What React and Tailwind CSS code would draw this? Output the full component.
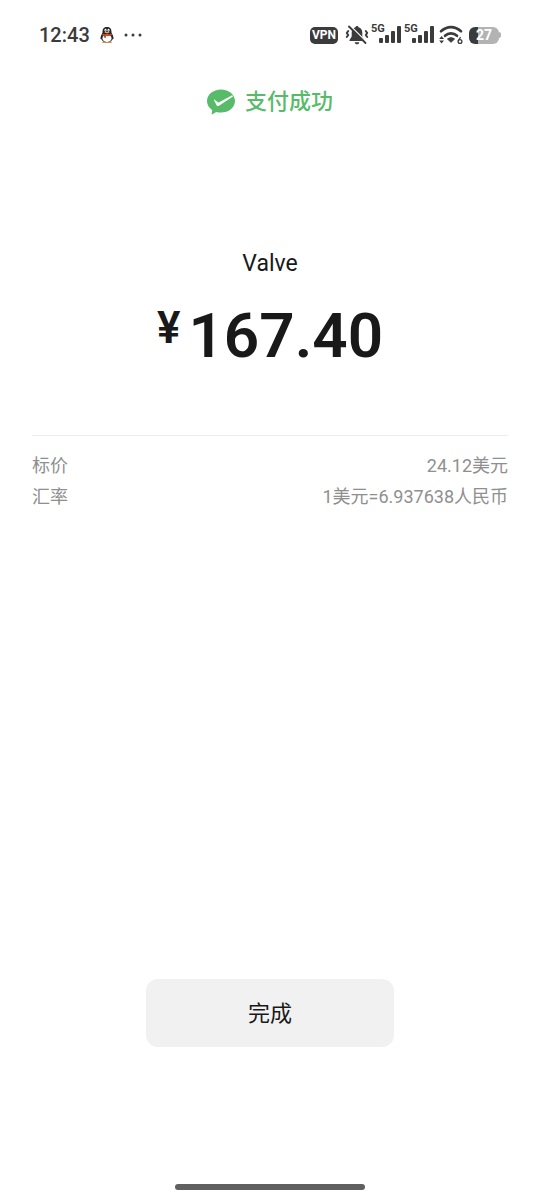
import React from 'react';

const details = [
    { label: '标价', value: '24.12美元' },
    { label: '汇率', value: '1美元=6.937638人民币' },
];

const PenguinIcon = () => (
    <svg className="w-[14px] h-4" viewBox="0 0 28 32" aria-hidden="true">
        <path d="M5 14 C0 19 0 25 3 25 L6 21 Z M23 14 C28 19 28 25 25 25 L22 21 Z" fill="#26262a" />
        <path d="M14 0 C6 0 5 5 5 11 C2 16 2 20 3 24 C5 30 10 31 14 31 C18 31 23 30 25 24 C26 20 26 16 23 11 C23 5 22 0 14 0 Z" fill="#26262a" />
        <ellipse cx="14" cy="22.5" rx="9" ry="7.5" fill="#fff" />
        <ellipse cx="11" cy="6.5" rx="2" ry="2.8" fill="#fff" />
        <ellipse cx="17" cy="6.5" rx="2" ry="2.8" fill="#fff" />
        <circle cx="11.6" cy="6.8" r="0.9" fill="#222" />
        <circle cx="16.4" cy="6.8" r="0.9" fill="#222" />
        <ellipse cx="14" cy="11" rx="5" ry="1.6" fill="#e8a33c" />
        <path d="M4.5 13 C10 16 18 16 23.5 13 L24 16 C19 18.500 15 18.500 12 18 L11.5 22 L8 21 L8 17.5 L4 16 Z" fill="#d8412f" />
        <ellipse cx="8.5" cy="30.5" rx="4.5" ry="1.5" fill="#d98a3a" />
        <ellipse cx="19.5" cy="30.5" rx="4.5" ry="1.5" fill="#d98a3a" />
    </svg>
);

const MutedBellIcon = () => (
    <svg className="w-6 h-5" viewBox="0 0 24 20" fill="none" aria-hidden="true">
        <path d="M12 1 C11 1 10.500 1.600 10.500 2.300 C8 3 6.700 5 6.700 7.500 V11.500 L4.500 15 V16 H19.500 V15 L17.300 11.500 V7.500 C17.300 5 16 3 13.500 2.300 C13.500 1.600 13 1 12 1 Z" fill="#3b3b3b" />
        <path d="M9.700 17.200 H14.300 C14 18.700 13.200 19.300 12 19.300 C10.800 19.300 10 18.700 9.700 17.200 Z" fill="#3b3b3b" />
        <path d="M6 1.500 L22 17.500" stroke="#fff" strokeWidth="1.500" />
        <path d="M4 1.500 L20.500 18" stroke="#3b3b3b" strokeWidth="1.800" strokeLinecap="round" />
        <path d="M3.200 6 L1.800 8 L3.200 10 L1.800 12 M20.800 6 L22.200 8 L20.800 10 L22.200 12" stroke="#3b3b3b" strokeWidth="2" strokeLinecap="round" strokeLinejoin="round" />
    </svg>
);

const Signal = () => (
    <div className="relative w-[30px] h-5">
        <span className="absolute left-0 -top-px text-[11px] leading-[10px] font-bold">5G</span>
        <svg className="ml-2 w-[22px] h-5" viewBox="0 0 22 20" fill="#3b3b3b" aria-hidden="true">
            <rect x="0" y="13" width="4" height="5" rx="1" />
            <rect x="6" y="10" width="4" height="8" rx="1" />
            <rect x="12" y="6" width="4" height="12" rx="1" />
            <rect x="18" y="1" width="4" height="17" rx="1" />
        </svg>
    </div>
);

const WifiIcon = () => (
    <svg className="w-6 h-5" viewBox="0 0 24 20" fill="none" aria-hidden="true">
        <path d="M2 6.300 C8 0.700 16 0.700 22 6.300" stroke="#3b3b3b" strokeWidth="2.600" strokeLinecap="round" />
        <path d="M6 10.800 C9.500 7.600 14.500 7.600 18 10.800" stroke="#3b3b3b" strokeWidth="2.600" strokeLinecap="round" />
        <path d="M12 17.300 L8.500 14 C10.500 12.300 13.500 12.300 15.500 14 Z" fill="#3b3b3b" stroke="#3b3b3b" strokeLinejoin="round" />
        <path d="M2.600 11 L5 14 H0.200 Z M2.600 18.500 L5 15.500 H0.200 Z" fill="#3b3b3b" />
        <path d="M21.300 12.500 L19.400 15.800" stroke="#3b3b3b" strokeWidth="1.300" strokeLinecap="round" />
        <circle cx="21" cy="16.500" r="1.900" stroke="#3b3b3b" strokeWidth="1.300" />
    </svg>
);

const Battery = () => (
    <div className="flex items-center">
        <div className="w-[30px] h-[17px] rounded-[6px] bg-linear-to-r from-[#3b3b3b] from-30% to-[#b3b3b3] to-30% text-white text-[14px] leading-[17px] font-bold text-center">
            27
        </div>
        <span className="w-[2px] h-[6px] rounded-r-full bg-[#b3b3b3]" />
    </div>
);

const StatusBar = () => (
    <header className="flex items-center justify-between h-[70px] px-[39px] text-[#3b3b3b]">
        <div className="flex items-center">
            <time className="text-[20px] leading-6 font-medium">12:43</time>
            <span className="ml-[10px]"><PenguinIcon /></span>
            <svg className="ml-[10px] w-[18px] h-1" viewBox="0 0 18 4" fill="#3b3b3b" aria-hidden="true">
                <circle cx="2" cy="2" r="1.500" />
                <circle cx="9" cy="2" r="1.500" />
                <circle cx="16" cy="2" r="1.500" />
            </svg>
        </div>
        <div className="flex items-center">
            <span className="w-7 h-[17px] mr-[7px] rounded-[5px] bg-[#3b3b3b] text-white text-[12px] leading-[17px] font-bold text-center">VPN</span>
            <MutedBellIcon />
            <div className="flex gap-[3px] ml-[2px] mr-[5px]">
                <Signal />
                <Signal />
            </div>
            <WifiIcon />
            <span className="ml-[6px]"><Battery /></span>
        </div>
    </header>
);

const SuccessIcon = () => (
    <svg className="w-7 h-[26px]" viewBox="0 0 28 26" fill="none" aria-hidden="true">
        <path d="M14 0.500 C6.300 0.500 0 5.500 0 12 C0 15.800 2 19 5.300 21.200 L4.600 24.700 C4.500 25.300 5 25.500 5.500 25.200 L9.200 23 C10.700 23.400 12.300 23.600 14 23.600 C21.700 23.600 28 18.500 28 12 C28 5.500 21.700 0.500 14 0.500 Z" fill="#57bb69" />
        <path d="M7.300 10.600 L10.800 13.200 C11.200 13.500 11.600 13.500 12.100 13.200 L25.200 6.200 L26 7.400 L12 16.700 C11 17.300 10.100 17.200 9.600 16.200 L7 11.200 C6.800 10.700 7 10.400 7.300 10.600 Z" fill="#fff" />
    </svg>
);

const App = () => {
    return (
        <div className="min-h-screen flex flex-col bg-white text-[#191919] font-[Roboto,'Noto_Sans_CJK_SC',sans-serif]">
            <StatusBar />

            <main className="flex-1 flex flex-col px-8">
                <div className="flex items-center justify-center gap-[10px] h-16 text-[#57bb69]">
                    <SuccessIcon />
                    <h1 className="text-[22px] leading-8 font-medium">支付成功</h1>
                </div>

                <section className="mt-[114px] text-center">
                    <h2 className="text-[23px] leading-8 font-normal">Valve</h2>
                    <p className="flex items-start justify-center gap-2 mt-5 font-semibold">
                        <span className="text-[44px] leading-[56px]">¥</span>
                        <span className="text-[62px] leading-[72px]">167.40</span>
                    </p>
                </section>

                <dl className="mt-[63px] pt-[14px] border-t border-[#ededed] text-[18px] leading-[31px] text-[#8f8f8f]">
                    {details.map(item => (
                        <div key={item.label} className="flex justify-between">
                            <dt>{item.label}</dt>
                            <dd>{item.value}</dd>
                        </div>
                    ))}
                </dl>

                <button
                    type="button"
                    className="mt-auto mx-auto w-[248px] h-[68px] rounded-xl bg-[#f1f1f1] text-[22px]"
                >
                    完成
                </button>
            </main>

            <footer className="flex items-end justify-center h-[152px] pb-[9px]">
                <span className="w-[190px] h-[6px] rounded-full bg-[#606060]" />
            </footer>
        </div>
    );
};

export default App;
